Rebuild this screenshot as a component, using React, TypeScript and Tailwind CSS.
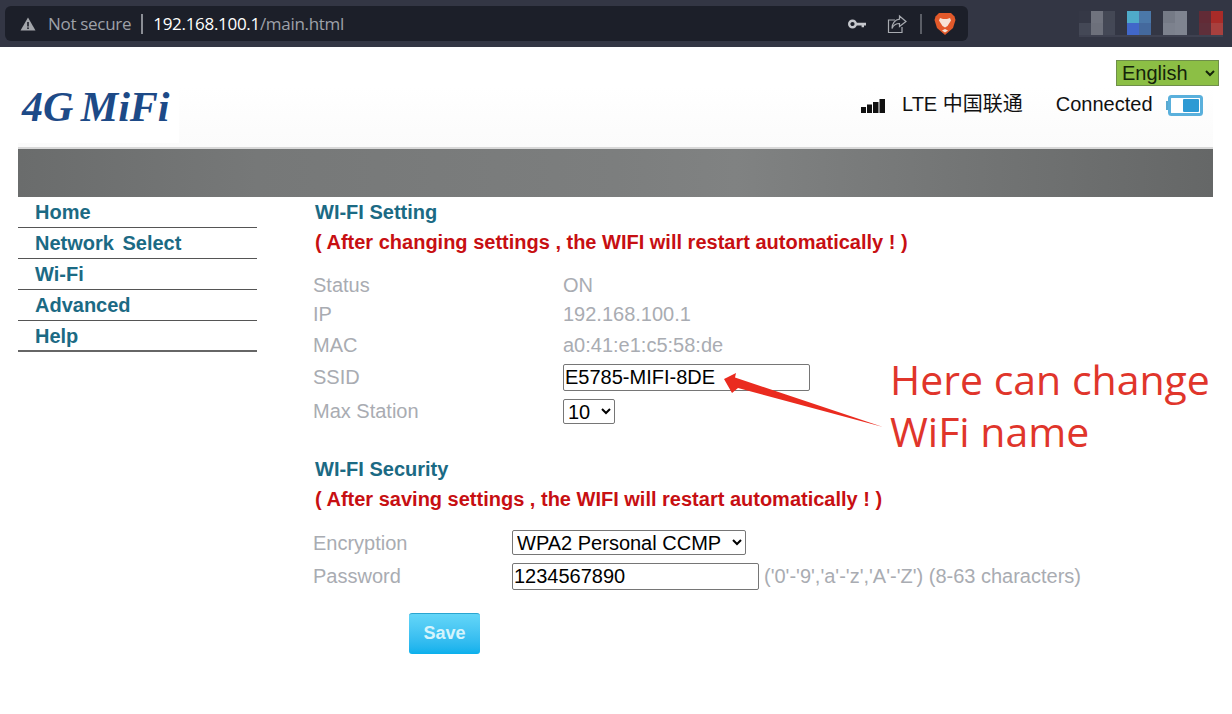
import { useState } from "react";

const navItems = ["Home", "Network Select", "Wi-Fi", "Advanced", "Help"];

function Mosaic() {
  const cells = [
    ["#353846", "#444856"],
    ["#70737e", "#6d707b"],
    ["#444855", "#444856"],
    ["#333644", "#333644"],
    ["#4fabc9", "#4167c9"],
    ["#4b78a9", "#44699d"],
    ["#333644", "#333644"],
    ["#757a86", "#7c818d"],
    ["#7f8490", "#7f8490"],
    ["#333644", "#333644"],
    ["#622b36", "#5f2f3a"],
    ["#a92b28", "#a8403e"],
  ];
  return (
    <div className="ml-[111px] flex border-b-2 border-[#3e4150]">
      {cells.map((c, i) => (
        <div key={i} className="flex w-[12px] flex-col">
          <div className="h-[12px]" style={{ background: c[0] }} />
          <div className="h-[12px]" style={{ background: c[1] }} />
        </div>
      ))}
    </div>
  );
}

function BrowserBar() {
  return (
    <div className="flex h-[47px] items-center bg-[#333644] pl-[5px]">
      <div className="flex h-[35px] w-[963px] items-center rounded-[6px] bg-[#1c1f29] pl-[15px] pr-[12px] font-['Open_Sans','Noto_Sans',sans-serif] text-[17px] tracking-[-0.3px]">
        <svg width="16" height="14" viewBox="0 0 16 14" className="mr-[12px]">
          <path d="M8 0.5 L15.5 13.5 H0.5 Z" fill="#a3a6ab" />
          <rect x="7.2" y="5" width="1.6" height="4.5" fill="#1c1f29" />
          <rect x="7.2" y="10.4" width="1.6" height="1.6" fill="#1c1f29" />
        </svg>
        <span className="text-[#9ea1a8]">Not secure</span>
        <span className="mx-[10px] h-[20px] w-[2px] bg-[#8b8e95]" />
        <span className="text-white">192.168.100.1</span>
        <span className="text-[#9ea1a8]">/main.html</span>
        <div className="ml-auto flex items-center">
          <svg width="18" height="10" viewBox="0 0 18 10">
            <circle cx="4.5" cy="5" r="3.3" fill="none" stroke="#c5c7cc" strokeWidth="2.4" />
            <path d="M8 3.8 H18 V6.6 H16 V8.2 H13.6 V6.6 H8 Z" fill="#c5c7cc" />
          </svg>
          <svg width="20" height="20" viewBox="0 0 20 20" className="ml-[21px]" fill="none" stroke="#a8abb1" strokeWidth="1.2">
            <path d="M8 6 H1.5 V18.5 H15 V13" />
            <path d="M12.5 2 L19 7.5 L12.5 12.5 V9.5 C9.5 9.5 6.5 11 5 14.5 C5 9.5 8 5.5 12.5 5.2 Z" />
          </svg>
          <span className="ml-[13px] h-[20px] w-[2px] bg-[#5b5e66]" />
          <svg width="22" height="24" viewBox="0 0 22 24" className="ml-[12px]">
            <path d="M5 1 H17 L20.5 4.5 L21.5 8 L19 16 L11 23 L3 16 L0.5 8 L1.5 4.5 Z" fill="#e2592a" />
            <path d="M6 6 L9 7 H13 L16 6 L17 8.5 L13.5 14 L11 15.5 L8.5 14 L5 8.5 Z" fill="#f7e4d6" />
            <path d="M8 18.5 L11 17 L14 18.5 L11 20.5 Z" fill="#f7e4d6" />
          </svg>
        </div>
      </div>
      <Mosaic />
    </div>
  );
}

function Row({ label, children, height }: { label: string; children: React.ReactNode; height: string }) {
  return (
    <div className={`flex items-center ${height}`}>
      <span className="w-[250px] text-[#a9acb2]">{label}</span>
      {children}
    </div>
  );
}

export default function App() {
  const [ssid, setSsid] = useState("E5785-MIFI-8DE");
  const [password, setPassword] = useState("1234567890");

  return (
    <div className="relative h-[714px] w-[1232px] overflow-hidden bg-white font-['Liberation_Sans',Arial,sans-serif] text-[20px]">
      <BrowserBar />

      {/* header */}
      <div className="pl-[18px] pr-[13px]">
        <div className="flex h-[39px] items-center justify-end pt-[13px]">
          <select className="h-[26px] w-[103px] border border-[#6f8f4a] bg-[#8cbf45] pl-[1px] text-[20px] leading-none text-[#14230a]">
            <option>English</option>
          </select>
        </div>
        <div className="flex h-[63px] w-[1195px] items-start border-b-2 border-[#d8d8d8] bg-gradient-to-b from-white to-[#fbfbfb]">
          <div className="h-[57px] w-[161px] bg-white pl-[4px] pt-[1px]">
            <span className="block font-['Liberation_Serif',serif] text-[42px] font-bold italic leading-[40px] text-[#1d4a87] [word-spacing:-3px]">
              4G MiFi
            </span>
          </div>
          <div className="ml-[682px] mt-[3px] flex h-[30px] items-center">
            <svg width="24" height="15" viewBox="0 0 24 15" className="mt-[3px]">
              <rect x="0" y="9" width="5" height="6" fill="#111" />
              <rect x="6" y="6.5" width="5" height="8.5" fill="#111" />
              <rect x="12" y="4" width="5.5" height="11" fill="#111" />
              <rect x="18.5" y="1" width="5.5" height="14" fill="#111" />
            </svg>
            <span className="ml-[17px] font-['Liberation_Sans','Noto_Sans_CJK_SC',sans-serif] text-[#111]">LTE 中国联通</span>
            <span className="ml-[33px] text-[#111]">Connected</span>
            <svg width="37" height="21" viewBox="0 0 37 21" className="ml-[13px] mt-[3px]">
              <rect x="0" y="6" width="3.5" height="9" fill="#5aa9d0" />
              <rect x="3.5" y="1.5" width="32" height="18" rx="2" fill="#fff" stroke="#5ab0dc" strokeWidth="3" />
              <rect x="17" y="4" width="16" height="13" rx="1" fill="#2d9ad4" />
            </svg>
          </div>
        </div>
        <div className="h-[48px] w-[1195px] bg-[linear-gradient(90deg,#6a6c6c_0%,#767878_20%,#7c7e7e_50%,#808282_60%,#6f7171_85%,#656767_100%)]" />
      </div>

      <div className="flex pl-[18px]">
        {/* nav */}
        <nav className="w-[239px] font-bold text-[#1b6a84]">
          {navItems.map((item, i) => (
            <div
              key={item}
              className={`flex h-[31px] items-center pl-[17px] [word-spacing:3px] ${i === navItems.length - 1 ? "border-b-2 border-[#666]" : "border-b border-[#555]"}`}
            >
              {item}
            </div>
          ))}
        </nav>

        {/* main */}
        <main className="ml-[56px] flex-1">
          <h2 className="h-[30px] pl-[2px] font-bold text-[#1b6a84]">WI-FI Setting</h2>
          <p className="h-[28px] pl-[2px] font-bold text-[#c70f12]">
            ( After changing settings , the WIFI will restart automatically ! )
          </p>
          <div className="mt-[16px]">
            <Row label="Status" height="h-[28px]"><span className="text-[#a9acb2]">ON</span></Row>
            <Row label="IP" height="h-[30px]"><span className="text-[#a9acb2]">192.168.100.1</span></Row>
            <Row label="MAC" height="h-[31px]"><span className="text-[#a9acb2]">a0:41:e1:c5:58:de</span></Row>
            <Row label="SSID" height="h-[34px]">
              <input
                value={ssid}
                onChange={(e) => setSsid(e.target.value)}
                className="h-[27px] w-[247px] rounded-[2px] border border-[#767676] pl-[1px] text-[20px] text-black"
              />
            </Row>
            <Row label="Max Station" height="h-[34px]">
              <select className="h-[25px] w-[52px] rounded-[2px] border border-[#767676] bg-white text-[20px] text-black">
                <option>10</option>
              </select>
            </Row>
          </div>

          <h2 className="mt-[26px] h-[30px] pl-[2px] font-bold text-[#1b6a84]">WI-FI Security</h2>
          <p className="h-[28px] pl-[2px] font-bold text-[#c70f12]">
            ( After saving settings , the WIFI will restart automatically ! )
          </p>
          <div className="mt-[14px]">
            <div className="flex h-[33px] items-center">
              <span className="w-[199px] text-[#a9acb2]">Encryption</span>
              <select className="h-[25px] w-[234px] rounded-[2px] border border-[#767676] bg-white text-[20px] text-black">
                <option>WPA2 Personal CCMP</option>
              </select>
            </div>
            <div className="flex h-[34px] items-center">
              <span className="w-[199px] text-[#a9acb2]">Password</span>
              <input
                value={password}
                onChange={(e) => setPassword(e.target.value)}
                className="h-[27px] w-[247px] rounded-[2px] border border-[#767676] pl-[1px] text-[20px] text-black"
              />
              <span className="ml-[5px] text-[#a9acb2]">('0'-'9','a'-'z','A'-'Z') (8-63 characters)</span>
            </div>
          </div>
          <button className="ml-[96px] mt-[20px] h-[41px] w-[71px] rounded-[3px] border-t border-[#2aa5d0] bg-gradient-to-b from-[#63d6f8] to-[#08b0ec] pb-[2px] text-[18px] font-bold text-[#d5f4fc]">
            Save
          </button>
        </main>
      </div>

      {/* annotation drawn over the screenshot */}
      <svg width="170" height="60" viewBox="720 372 170 60" className="absolute left-[720px] top-[372px]">
        <polygon points="724,379 736,373 735,377.5 883,427 738,388 732,393" fill="#ea2b1f" />
      </svg>
      <div className="absolute left-[890px] top-[353px] font-['Open_Sans','Noto_Sans',sans-serif] text-[41px] leading-[52px] text-[#e0352b]">
        <div>Here can change</div>
        <div>WiFi name</div>
      </div>
    </div>
  );
}
